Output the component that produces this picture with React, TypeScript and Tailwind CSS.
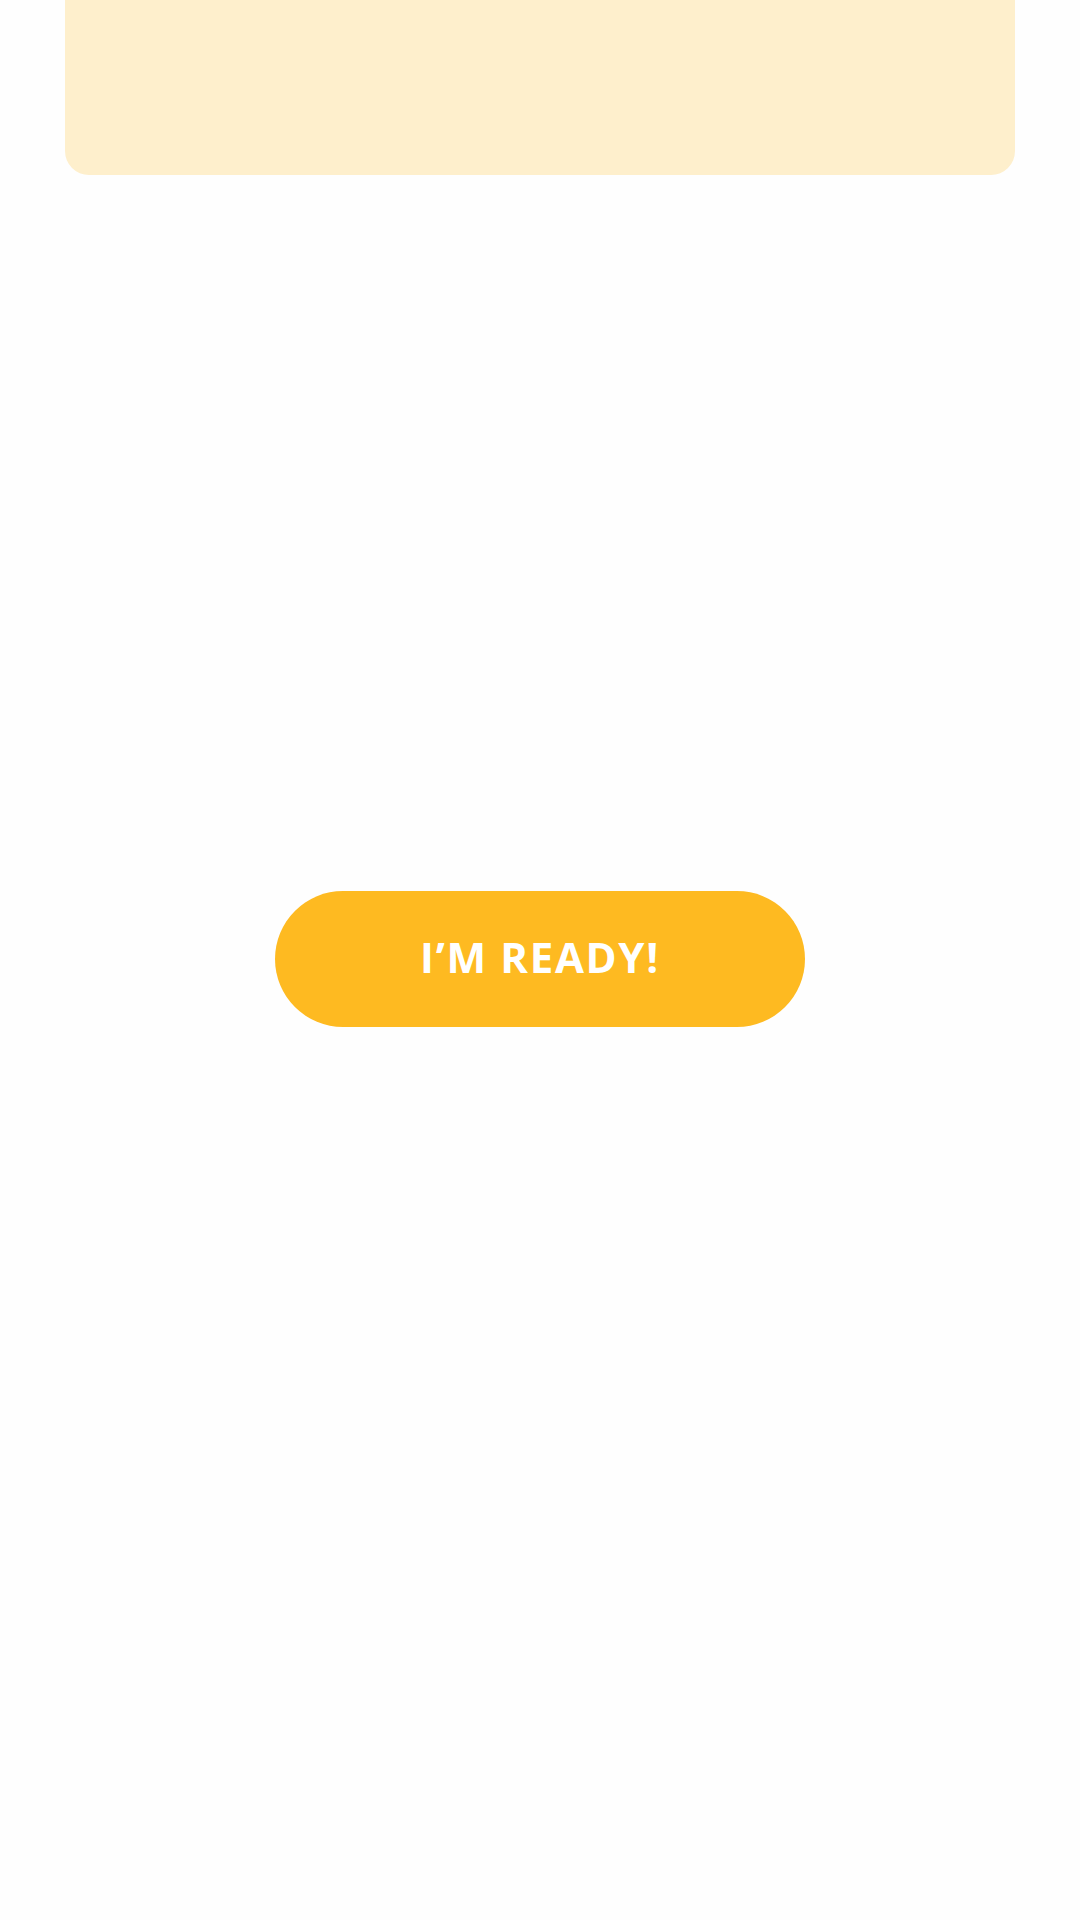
export default function App() {
  return (
    <div
      className="min-h-[1920px] w-[1080px] bg-[#fefefe] flex flex-col items-center"
      style={{ fontFamily: '"Open Sans", "Noto Sans", sans-serif' }}
    >
      <div className="w-[950px] h-[175px] bg-[#feefcc] rounded-b-[24px]" />

      <button
        type="button"
        className="mt-[716px] w-[530px] h-[136px] rounded-full bg-[#feba21] text-white font-bold text-[42px] leading-none tracking-[0.04em] pb-1 flex items-center justify-center"
      >
        I’M READY!
      </button>
    </div>
  );
}
